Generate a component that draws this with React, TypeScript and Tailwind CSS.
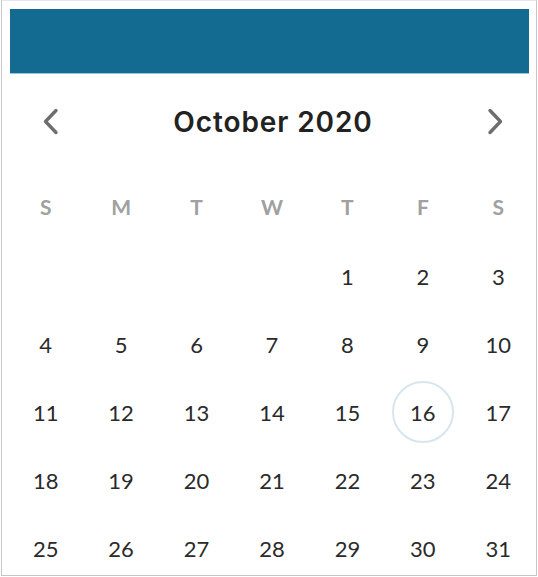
const WEEKDAYS = ["S", "M", "T", "W", "T", "F", "S"];

// October 2020 starts on a Thursday
const CELLS: (number | null)[] = [
  null, null, null, null,
  ...Array.from({ length: 31 }, (_, i) => i + 1),
];

const TODAY = 16;

function Chevron({ dir }: { dir: "left" | "right" }) {
  return (
    <svg width="17" height="27" viewBox="0 0 17 27" fill="none" aria-hidden="true">
      <polyline
        points={dir === "left" ? "14,2.5 3.5,13.5 14,24.5" : "3,2.5 13.5,13.5 3,24.5"}
        stroke="currentColor"
        strokeWidth="3.4"
        strokeLinecap="round"
        strokeLinejoin="round"
      />
    </svg>
  );
}

export default function App() {
  return (
    <div className="w-[538px] h-[577px] bg-white pl-[1px] pr-[1px] pb-[1px]">
      <div
        className="h-[576px] w-[536px] overflow-hidden border border-[#c6c6c6] border-t-[#e6e6e6] bg-white"
        style={{ fontFamily: "Lato, 'Noto Sans', sans-serif" }}
      >
        {/* Barra superior */}
        <div className="ml-[8px] mr-[7px] mt-[8px] h-[65px] bg-[#136b91] border-b border-[#8cc9e2]" />

        {/* Cabecera del mes */}
        <div className="flex h-[95px] items-center justify-between pl-[40px] pr-[32px]">
          <button type="button" aria-label="Mes anterior" className="text-[#6e6e6e]">
            <Chevron dir="left" />
          </button>
          <h2
            className="text-[28px] font-semibold tracking-[0.9px] text-[#222]"
            style={{ fontFamily: "Inter, Lato, sans-serif" }}
          >
            October 2020
          </h2>
          <button type="button" aria-label="Mes siguiente" className="text-[#6e6e6e]">
            <Chevron dir="right" />
          </button>
        </div>

        {/* Calendario */}
        <div className="mt-[4px] grid grid-cols-7 pl-[6px] auto-rows-[68px]">
          {WEEKDAYS.map((d, i) => (
            <div key={i} className="flex items-center justify-center text-[21px] font-bold text-[#a0a0a0]">
              {d}
            </div>
          ))}
          {CELLS.map((n, i) => (
            <div key={i} className="flex items-center justify-center pt-[2px]">
              {n !== null && (
                <span
                  className={`flex h-[62px] w-[62px] items-center justify-center rounded-full text-[22px] text-[#2a2a2a] ${
                    n === TODAY ? "border-2 border-[#d7e5ee]" : ""
                  }`}
                >
                  {n}
                </span>
              )}
            </div>
          ))}
        </div>
      </div>
    </div>
  );
}
